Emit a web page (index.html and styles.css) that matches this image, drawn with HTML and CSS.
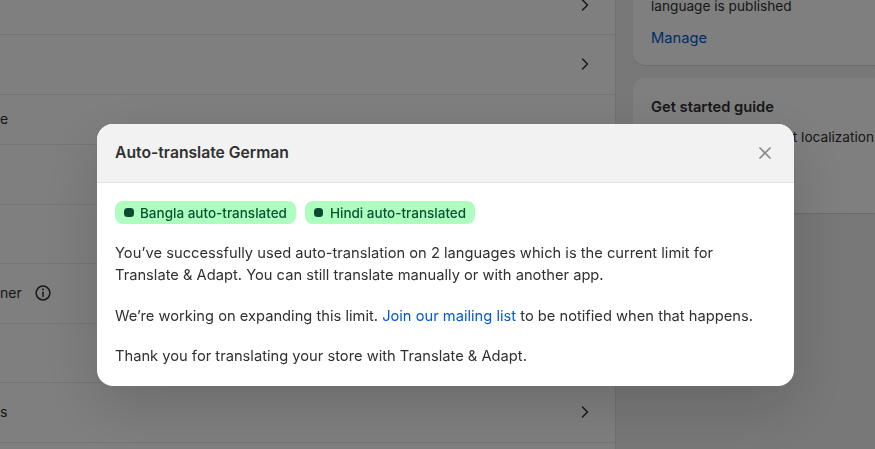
FILE: index.html
```html
<!DOCTYPE html>
<html lang="en">
<head>
<meta charset="utf-8">
<title>Auto-translate German</title>
<link rel="stylesheet" href="styles.css">
</head>
<body>
<div class="page">
  <section class="list">
    <div class="row row-a"><svg class="chev" viewBox="0 0 16 16"><path d="M5.5 3l5 5-5 5"/></svg></div>
    <div class="row"><svg class="chev" viewBox="0 0 16 16"><path d="M5.5 3l5 5-5 5"/></svg></div>
    <div class="row row-c"><span>e</span></div>
    <div class="row"></div>
    <div class="row row-d"></div>
    <div class="row"><span>ner</span><svg class="info" viewBox="0 0 20 20"><circle cx="10" cy="10" r="6.9"/><path d="M10 9.2v4.2"/><circle class="dot" cx="10" cy="6.6" r="1"/></svg></div>
    <div class="row row-d"></div>
    <div class="row"><span>s</span><svg class="chev" viewBox="0 0 16 16"><path d="M5.5 3l5 5-5 5"/></svg></div>
    <div class="row row-end"></div>
  </section>
  <aside class="side">
    <div class="card card-top">
      <p class="card-line">language is published</p>
      <a class="manage">Manage</a>
    </div>
    <div class="card card-guide">
      <h3>Get started guide</h3>
      <p class="guide-text">Learn about localization</p>
    </div>
  </aside>
</div>
<div class="overlay"></div>
<div class="modal">
  <header class="modal-head">
    <h2>Auto-translate German</h2>
    <svg class="close" viewBox="0 0 16 16"><path d="M2.5 2.5l11 11M13.5 2.5l-11 11"/></svg>
  </header>
  <div class="modal-body">
    <div class="badges">
      <span class="badge"><i class="badge-dot"></i>Bangla auto-translated</span>
      <span class="badge"><i class="badge-dot"></i>Hindi auto-translated</span>
    </div>
    <p>You’ve successfully used auto-translation on 2 languages which is the current limit for Translate &amp; Adapt. You can still translate manually or with another app.</p>
    <p>We’re working on expanding this limit. <a class="link">Join our mailing list</a> to be notified when that happens.</p>
    <p>Thank you for translating your store with Translate &amp; Adapt.</p>
  </div>
</div>
</body>
</html>
```
FILE: styles.css
```css
* { box-sizing: border-box; }
html, body { margin: 0; height: 100%; overflow: hidden; }
body {
  font-family: Inter, "Liberation Sans", sans-serif;
  font-size: 14px;
  line-height: 20px;
  color: #303030;
  background: #f1f1f1;
}
p, h2, h3 { margin: 0; }
.page { display: flex; gap: 17px; height: 449px; width: 875px; overflow: hidden; }
.list {
  flex: 0 0 616px;
  background: #fff;
  border-right: 1px solid #e3e3e3;
}
.row {
  display: flex;
  align-items: center;
  flex-shrink: 0;
  border-bottom: 1px solid #ebebeb;
  padding-right: 22px;
  padding-bottom: 2px;
  height: 60px;
}
.row-a { height: 35px; padding-bottom: 24px; }
.row-c { height: 50px; }
.row-d { height: 59px; }
.row-end { border-bottom: 0; }
.chev { width: 16px; height: 16px; margin-left: auto; fill: none; stroke: #303030; stroke-width: 1.5; stroke-linecap: round; stroke-linejoin: round; }
.info { width: 20px; height: 20px; margin-left: 11px; fill: none; stroke: #303030; stroke-width: 1.5; stroke-linecap: round; }
.info .dot { fill: #303030; stroke: none; }
.side { flex: 0 0 242px; display: flex; flex-direction: column; gap: 13px; }
.card { background: #fff; border-radius: 0 0 0 12px; padding: 0 0 0 18px; box-shadow: 0 1px 1px rgba(26,26,26,.12); }
.card-top { height: 65px; }
.card-line { font-size: 13.65px; line-height: 13px; }
.manage { display: block; margin-top: 15px; color: #005bd3; font-size: 14.7px; line-height: 20px; }
.card-guide { height: 135px; padding-top: 19px; border-radius: 12px 0 0 12px; }
.card-guide h3 { font-size: 14.7px; font-weight: 600; }
.guide-text { margin-top: 10px; padding-right: 1px; font-size: 13.65px; white-space: nowrap; text-align: right; }
.overlay { position: fixed; inset: 0; background: rgba(0,0,0,.5); }
.modal {
  position: fixed;
  left: 97px;
  top: 124px;
  width: 697px;
  height: 262px;
  background: #fff;
  border-radius: 16px;
  overflow: hidden;
  box-shadow: 0 20px 60px rgba(0,0,0,.16);
}
.modal-head {
  display: flex;
  align-items: center;
  justify-content: space-between;
  height: 59px;
  padding: 0 21px 0 18px;
  background: #f2f2f2;
  border-bottom: 1px solid #e3e3e3;
}
.modal-head h2 { font-size: 15.7px; font-weight: 600; }
.close { width: 16px; height: 16px; fill: none; stroke: #8a8a8a; stroke-width: 1.6; }
.modal-body { padding: 18px; display: flex; flex-direction: column; gap: 18.5px; font-size: 14.7px; line-height: 22px; }
.badges { display: flex; gap: 9px; margin-bottom: -.5px; }
.badge {
  display: inline-flex;
  align-items: center;
  height: 23px;
  padding: 0 9px;
  background: #aefebf;
  border-radius: 8px;
  color: #0c5132;
  font-size: 13.5px;
  font-weight: 500;
  line-height: 20px;
}
.badge-dot { width: 9.5px; height: 9.5px; margin-right: 6.5px; border-radius: 3.5px; background: #0c4a33; }
.link { color: #005bd3; }
```
